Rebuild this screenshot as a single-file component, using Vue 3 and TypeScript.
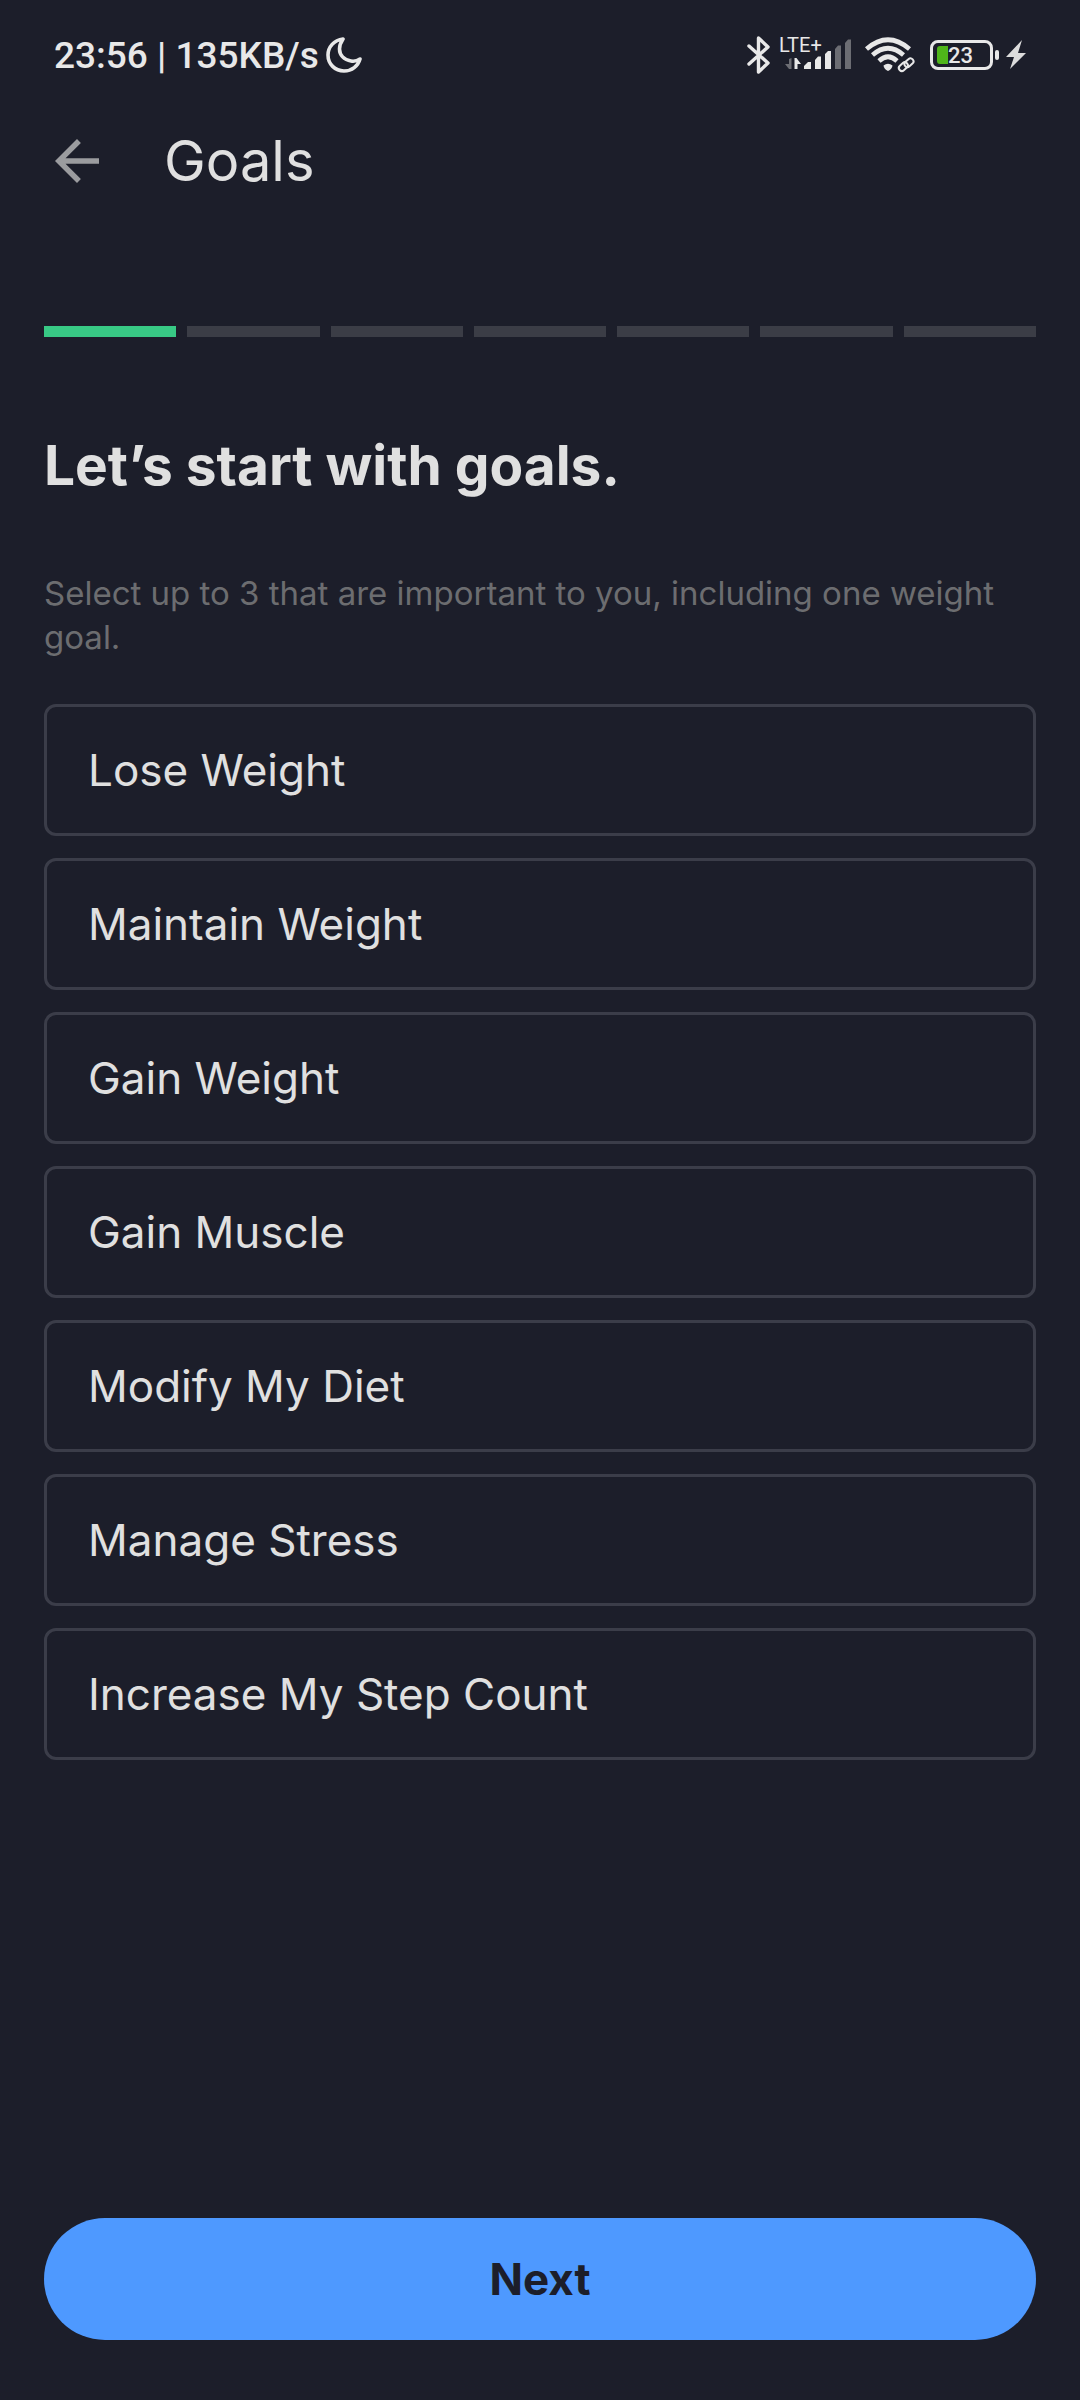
<script setup lang="ts">
import { ref } from 'vue'

const goals: string[] = [
  'Lose Weight',
  'Maintain Weight',
  'Gain Weight',
  'Gain Muscle',
  'Modify My Diet',
  'Manage Stress',
  'Increase My Step Count',
]
const steps = 7
const currentStep = 1
const maxGoals = 3
const selected = ref<string[]>([])

function toggle(goal: string): void {
  if (selected.value.includes(goal)) {
    selected.value = selected.value.filter((g) => g !== goal)
  } else if (selected.value.length < maxGoals) {
    selected.value = [...selected.value, goal]
  }
}
</script>

<template>
  <div class="screen">
    <div class="status">
      <div class="status-left">
        <span class="clock">23:56 | 135KB/s</span>
        <svg class="moon" width="36" height="38" viewBox="0 0 36 38" aria-hidden="true">
          <path
            d="M17 3C8 4 2 11 2 19C2 28 9 35 18 35C26 35 32 30 34 23C31 25 28 25.500 25 25C18 24 13.500 19 13.500 13C13.500 9 15 6 17 3Z"
            fill="none" stroke="#e8e8e8" stroke-width="3.600" stroke-linejoin="round"
          />
        </svg>
      </div>
      <div class="status-right">
        <svg width="26" height="40" viewBox="0 0 26 40" aria-hidden="true">
          <path
            d="M3 11L22 28L12.500 37V3L22 12L3 29"
            fill="none" stroke="#e8e8e8" stroke-width="3.400" stroke-linejoin="round" stroke-linecap="round"
          />
        </svg>
        <svg class="signal" width="76" height="52" viewBox="-2 -6 76 52" aria-hidden="true">
          <text x="-1" y="17" class="network">LTE+</text>
          <path d="M11.500 23V34H9L5 29H9V24Z" fill="#6c6d73" />
          <path d="M14.500 23H16.500L21 29H17.500V34H14.500Z" fill="#e8e8e8" />
          <path d="M24 34V31L28 27H31V34ZM35 34V25L38 21.500H41V34ZM45 34V19L48 16H51V34Z" fill="#e8e8e8" />
          <path d="M55 34V14L58 10.500H61V34ZM65 34V8L68 4.500H71V34Z" fill="#6c6d73" />
        </svg>
        <svg class="wifi" width="52" height="40" viewBox="864 36 52 40" aria-hidden="true">
          <g fill="none" stroke="#e8e8e8" stroke-width="4.600">
            <path d="M866.500 50Q888 31.500 909.500 50" />
            <path d="M872.500 56Q888 42.500 903.500 56" />
            <path d="M879 62Q888 53.500 897 62" />
          </g>
          <path d="M883.500 66.500Q888 63 892.500 66.500Q892 70 888 72Q884 70 883.500 66.500Z" fill="#e8e8e8" />
          <g fill="none" stroke="#1c1e2a" stroke-width="6">
            <rect x="898.500" y="65" width="10" height="6" rx="3" transform="rotate(-42 903 68)" />
            <rect x="903.500" y="60.500" width="10" height="6" rx="3" transform="rotate(-42 909 63)" />
          </g>
          <g fill="none" stroke="#e8e8e8" stroke-width="2">
            <rect x="898.500" y="65" width="10" height="6" rx="3" transform="rotate(-42 903 68)" />
            <rect x="903.500" y="60.500" width="10" height="6" rx="3" transform="rotate(-42 909 63)" />
          </g>
        </svg>
        <svg class="battery" width="70" height="40" viewBox="0 0 70 40" aria-hidden="true">
          <rect x="1.500" y="6.500" width="60" height="27" rx="6.500" fill="none" stroke="#e8e8e8" stroke-width="3" />
          <path d="M18 11V29H10Q7 29 7 26V14Q7 11 10 11Z" fill="#4fb51a" />
          <rect x="65" y="15" width="4" height="10" rx="2" fill="#e8e8e8" />
          <text x="18" y="28" class="percent">23</text>
        </svg>
        <svg class="bolt" width="20" height="40" viewBox="0 0 20 40" aria-hidden="true">
          <path d="M16 5L0 22H8L4 34L20 18H12Z" fill="#dcdcdc" />
        </svg>
      </div>
    </div>

    <header class="appbar">
      <button class="back" type="button" aria-label="Back">
        <svg width="66" height="66" viewBox="0 0 24 24" aria-hidden="true">
          <path
            d="M20 11H7.830l5.590-5.590L12 4l-8 8 8 8 1.410-1.410L7.830 13H20v-2z"
            fill="#9b9c9f"
          />
        </svg>
      </button>
      <h1 class="title">Goals</h1>
    </header>

    <main class="content">
      <div class="progress" role="progressbar" :aria-valuenow="currentStep" aria-valuemin="0" :aria-valuemax="steps">
        <span v-for="n in steps" :key="n" class="segment" :class="{ done: n <= currentStep }"></span>
      </div>
      <h2 class="heading">Let’s start with goals.</h2>
      <p class="hint">Select up to 3 that are important to you, including one weight goal.</p>
      <div class="options">
        <button
          v-for="goal in goals"
          :key="goal"
          class="option"
          :class="{ chosen: selected.includes(goal) }"
          type="button"
          :aria-pressed="selected.includes(goal)"
          @click="toggle(goal)"
        >{{ goal }}</button>
      </div>
      <button class="next" type="button">Next</button>
    </main>
  </div>
</template>

<style>
body {
  margin: 0;
  background: #1c1e2a;
}
</style>

<style scoped>
.screen {
  display: flex;
  flex-direction: column;
  box-sizing: border-box;
  min-height: 100vh;
  background: #1c1e2a;
  color: #e0e0e0;
  font-family: Inter, sans-serif;
}
svg {
  display: block;
  flex: none;
}
button {
  font-family: inherit;
  cursor: pointer;
}
.status {
  display: flex;
  align-items: center;
  justify-content: space-between;
  height: 110px;
  padding: 0 54px;
}
.status-left,
.status-right {
  display: flex;
  align-items: center;
}
.clock {
  padding-top: 2px;
  font: 500 37px/44px Roboto, sans-serif;
  color: #e8e8e8;
}
.moon {
  margin-left: 7px;
}
.signal {
  margin-left: 6px;
}
.network {
  font: 400 20px Roboto, sans-serif;
  fill: #e8e8e8;
}
.wifi {
  margin-left: 10px;
}
.battery {
  margin-left: 14px;
}
.percent {
  font: 500 22px Roboto, sans-serif;
  fill: #e8e8e8;
}
.bolt {
  margin-left: 6px;
}
.appbar {
  display: flex;
  align-items: center;
  gap: 54px;
  height: 102px;
  padding: 0 44px;
}
.back {
  padding: 0;
  border: 0;
  background: none;
}
.title {
  margin: 0;
  font-size: 56px;
  line-height: 68px;
  font-weight: 400;
}
.content {
  display: flex;
  flex: 1;
  flex-direction: column;
  padding: 114px 44px 60px;
}
.progress {
  display: flex;
  gap: 11px;
}
.segment {
  flex: 1;
  height: 11px;
  background: #3b3d46;
}
.segment.done {
  background: #38c985;
}
.heading {
  margin: 95px 0 0;
  font-size: 55px;
  line-height: 66px;
  font-weight: 700;
}
.hint {
  margin: 73px 0 45px;
  font-size: 33px;
  line-height: 44px;
  color: #6c6d70;
}
.options {
  display: flex;
  flex-direction: column;
  gap: 22px;
  margin-bottom: 44px;
}
.option {
  height: 132px;
  padding: 0 41px;
  border: 3px solid #3b3d49;
  border-radius: 12px;
  background: none;
  color: inherit;
  font-size: 44px;
  text-align: left;
}
.option.chosen {
  border-color: #4e99ff;
}
.next {
  height: 122px;
  margin-top: auto;
  border: 0;
  border-radius: 61px;
  background: #4e99ff;
  color: #1c1e2a;
  font-size: 44px;
  font-weight: 700;
}
</style>
